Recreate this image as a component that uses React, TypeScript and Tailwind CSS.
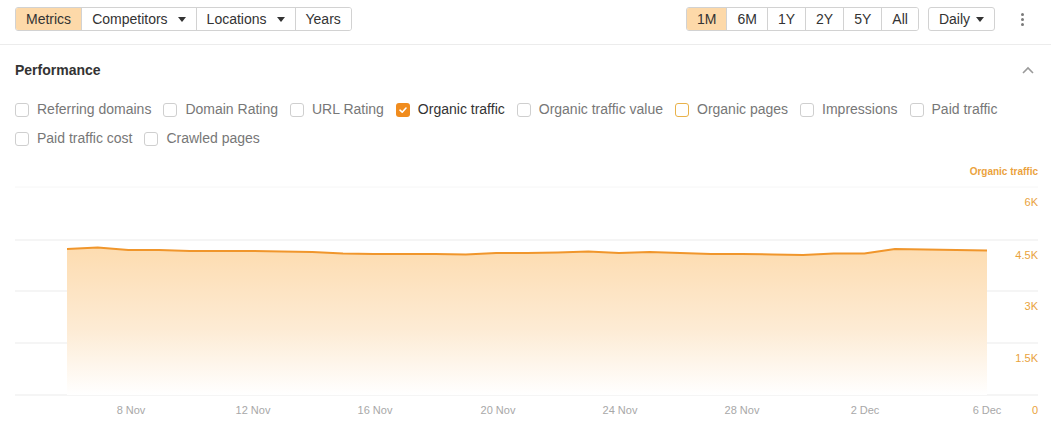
import { useState } from "react";

const font = "font-['Liberation_Sans',Arial,sans-serif]";

const leftTabs = [
  { label: "Metrics", caret: false },
  { label: "Competitors", caret: true },
  { label: "Locations", caret: true },
  { label: "Years", caret: false },
];

const ranges = ["1M", "6M", "1Y", "2Y", "5Y", "All"];

type Metric = { label: string; checked?: boolean; accent?: boolean };

const metrics: Metric[] = [
  { label: "Referring domains" },
  { label: "Domain Rating" },
  { label: "URL Rating" },
  { label: "Organic traffic", checked: true },
  { label: "Organic traffic value" },
  { label: "Organic pages", accent: true },
  { label: "Impressions" },
  { label: "Paid traffic" },
  { label: "Paid traffic cost" },
  { label: "Crawled pages" },
];

// y position (px) of each daily point, 6 Nov .. 6 Dec
const points = [
  249, 247.5, 250, 250, 251, 251, 251, 251.5, 252, 253.5, 254, 254, 254, 254.5,
  253, 253, 252.5, 251.5, 253, 252, 253, 254, 254, 254.5, 255, 253.5, 253.5,
  249, 249.5, 250, 250.5,
];

const xLabels = [
  { x: 131, t: "8 Nov" },
  { x: 253, t: "12 Nov" },
  { x: 375, t: "16 Nov" },
  { x: 498, t: "20 Nov" },
  { x: 620, t: "24 Nov" },
  { x: 742, t: "28 Nov" },
  { x: 865, t: "2 Dec" },
  { x: 987, t: "6 Dec" },
];

const yTicks = [
  { y: 187, t: "6K" },
  { y: 240, t: "4.5K" },
  { y: 291, t: "3K" },
  { y: 343, t: "1.5K" },
  { y: 395, t: "0" },
];

const Caret = () => (
  <svg width="8" height="5" viewBox="0 0 8 5">
    <path d="M0 0 L8 0 L4 5 Z" fill="#333" />
  </svg>
);

const Checkbox = ({ m }: { m: Metric }) => {
  const [on, setOn] = useState(!!m.checked);
  return (
    <label
      className="flex items-center gap-2 mr-3 cursor-pointer"
      onClick={() => setOn((v) => !v)}
    >
      {on ? (
        <span className="w-[14px] h-[14px] rounded-[3px] bg-[#f08c1e] flex items-center justify-center">
          <svg width="10" height="10" viewBox="0 0 10 10">
            <path
              d="M2 5.2 L4.2 7.2 L8 3"
              fill="none"
              stroke="#fff"
              strokeWidth="1.6"
              strokeLinecap="round"
              strokeLinejoin="round"
            />
          </svg>
        </span>
      ) : (
        <span
          className={
            "w-[14px] h-[14px] rounded-[3px] border bg-white " +
            (m.accent ? "border-[#e9b24a]" : "border-[#cfcfcf]")
          }
        />
      )}
      <span className={on ? "text-[#333]" : "text-[#777]"}>{m.label}</span>
    </label>
  );
};

const Chart = () => {
  const xs = points.map((_, i) => 67 + (i * 920) / 30);
  const line = points.map((y, i) => `${i ? "L" : "M"}${xs[i].toFixed(1)} ${y}`).join(" ");
  const area = `${line} L987 395 L67 395 Z`;
  return (
    <svg width="1051" height="266" viewBox="0 160 1051 266" className="block">
      <defs>
        <linearGradient id="fill" x1="0" y1="0" x2="0" y2="1">
          <stop offset="0" stopColor="#fddcb0" />
          <stop offset="0.55" stopColor="#fdebd4" />
          <stop offset="1" stopColor="#ffffff" />
        </linearGradient>
      </defs>
      <text x="1038" y="175" textAnchor="end" fontSize="10" fontWeight="bold" fill="#eba23d">
        Organic traffic
      </text>
      {yTicks.map((t, i) => (
        <g key={t.t}>
          <line
            x1="15"
            x2="1038"
            y1={t.y}
            y2={t.y}
            stroke={i === 0 ? "#f6f6f6" : "#ebebeb"}
            strokeWidth="1"
          />
          <text x="1038" y={t.y + 19} textAnchor="end" fontSize="11" fill="#e9a23c">
            {t.t}
          </text>
        </g>
      ))}
      <path d={area} fill="url(#fill)" />
      <path d={line} fill="none" stroke="#f0962c" strokeWidth="2" strokeLinejoin="round" />
      {xLabels.map((l) => (
        <text key={l.t} x={l.x} y="414" textAnchor="middle" fontSize="11" fill="#a8a8a8">
          {l.t}
        </text>
      ))}
    </svg>
  );
};

export default function App() {
  const [range, setRange] = useState("1M");
  return (
    <div className={`w-[1051px] h-[426px] bg-white overflow-hidden text-[14px] text-[#333] ${font}`}>
      {/* Toolbar */}
      <div className="h-[45px] border-b border-[#ececec] flex items-start pt-[7px] px-[15px]">
        <div className="flex h-[24px] border border-[#d2d2d2] rounded-[3px] overflow-hidden">
          {leftTabs.map((t, i) => (
            <button
              key={t.label}
              className={
                "flex items-center gap-[10px] px-[10px] leading-none " +
                (i ? "border-l border-[#d2d2d2] " : "") +
                (i === 0 ? "bg-[#fdd9a9]" : "bg-white")
              }
            >
              {t.label}
              {t.caret && <Caret />}
            </button>
          ))}
        </div>
        <div className="ml-auto flex items-center">
          <div className="flex h-[24px] border border-[#d2d2d2] rounded-[3px] overflow-hidden">
            {ranges.map((r, i) => (
              <button
                key={r}
                onClick={() => setRange(r)}
                className={
                  "px-[10px] leading-none " +
                  (i ? "border-l border-[#d2d2d2] " : "") +
                  (r === range ? "bg-[#fdd9a9]" : "bg-white")
                }
              >
                {r}
              </button>
            ))}
          </div>
          <button className="ml-[9px] h-[24px] flex items-center gap-[6px] px-[10px] border border-[#d2d2d2] rounded-[3px] leading-none">
            Daily
            <Caret />
          </button>
          <div className="ml-[26px] mr-[12px] flex flex-col items-center gap-[2px] pt-[1px]">
            <span className="w-[3px] h-[3px] rounded-full bg-[#7a7a7a]" />
            <span className="w-[3px] h-[3px] rounded-full bg-[#7a7a7a]" />
            <span className="w-[3px] h-[3px] rounded-full bg-[#7a7a7a]" />
          </div>
        </div>
      </div>

      {/* Section header */}
      <div className="h-[50px] flex items-center px-[15px]">
        <h2 className="font-bold text-[14px] text-[#333]">Performance</h2>
        <svg className="ml-auto mr-[2px]" width="12" height="8" viewBox="0 0 12 8">
          <path d="M1 7 L6 2 L11 7" fill="none" stroke="#9a9a9a" strokeWidth="1.6" />
        </svg>
      </div>

      {/* Metric checkboxes */}
      <div className="flex flex-wrap px-[15px] w-full">
        {metrics.map((m) => (
          <div key={m.label} className="h-[29px] flex items-center">
            <Checkbox m={m} />
          </div>
        ))}
      </div>

      <div className="mt-[7px]">
        <Chart />
      </div>
    </div>
  );
}
